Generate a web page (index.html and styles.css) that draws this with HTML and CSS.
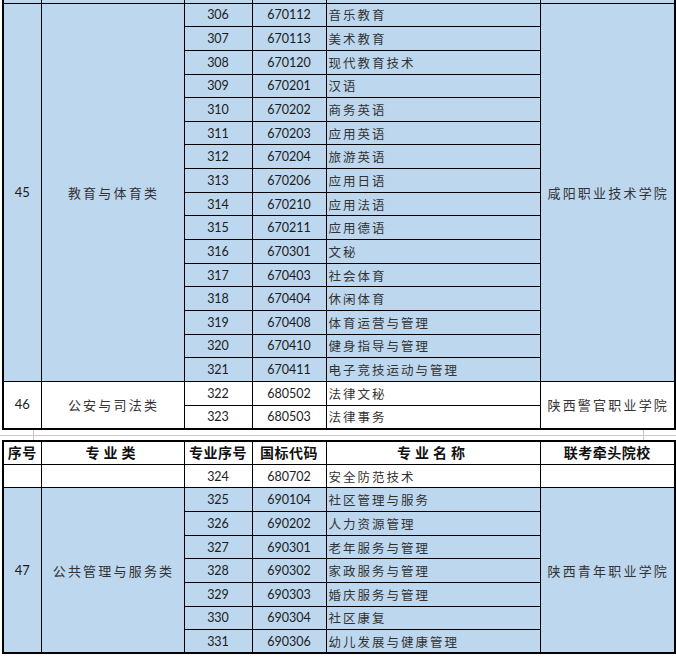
FILE: index.html
```html
<!DOCTYPE html>
<html lang="zh-CN">
<head>
<meta charset="utf-8">
<title>专业目录</title>
<link rel="stylesheet" href="styles.css">
</head>
<body>
<div class="page">
  <table class="grid first">
    <colgroup>
      <col class="c1"><col class="c2"><col class="c3"><col class="c4"><col class="c5"><col class="c6">
    </colgroup>
    <tbody>
      <tr class="blue cut"><td></td><td></td><td></td><td></td><td></td><td></td></tr>
      <tr class="blue"><td class="idx" rowspan="16">45</td><td class="cat" rowspan="16">教育与体育类</td><td class="num">306</td><td class="num">670112</td><td class="name">音乐教育</td><td class="school" rowspan="16">咸阳职业技术学院</td></tr>
      <tr class="blue"><td class="num">307</td><td class="num">670113</td><td class="name">美术教育</td></tr>
      <tr class="blue"><td class="num">308</td><td class="num">670120</td><td class="name">现代教育技术</td></tr>
      <tr class="blue"><td class="num">309</td><td class="num">670201</td><td class="name">汉语</td></tr>
      <tr class="blue"><td class="num">310</td><td class="num">670202</td><td class="name">商务英语</td></tr>
      <tr class="blue"><td class="num">311</td><td class="num">670203</td><td class="name">应用英语</td></tr>
      <tr class="blue"><td class="num">312</td><td class="num">670204</td><td class="name">旅游英语</td></tr>
      <tr class="blue"><td class="num">313</td><td class="num">670206</td><td class="name">应用日语</td></tr>
      <tr class="blue"><td class="num">314</td><td class="num">670210</td><td class="name">应用法语</td></tr>
      <tr class="blue"><td class="num">315</td><td class="num">670211</td><td class="name">应用德语</td></tr>
      <tr class="blue"><td class="num">316</td><td class="num">670301</td><td class="name">文秘</td></tr>
      <tr class="blue"><td class="num">317</td><td class="num">670403</td><td class="name">社会体育</td></tr>
      <tr class="blue"><td class="num">318</td><td class="num">670404</td><td class="name">休闲体育</td></tr>
      <tr class="blue"><td class="num">319</td><td class="num">670408</td><td class="name">体育运营与管理</td></tr>
      <tr class="blue"><td class="num">320</td><td class="num">670410</td><td class="name">健身指导与管理</td></tr>
      <tr class="blue"><td class="num">321</td><td class="num">670411</td><td class="name">电子竞技运动与管理</td></tr>
      <tr><td class="idx" rowspan="2">46</td><td class="cat" rowspan="2">公安与司法类</td><td class="num">322</td><td class="num">680502</td><td class="name">法律文秘</td><td class="school" rowspan="2">陕西警官职业学院</td></tr>
      <tr><td class="num">323</td><td class="num">680503</td><td class="name">法律事务</td></tr>
    </tbody>
  </table>

  <div class="break">
    <span class="tick left"></span>
    <span class="tick right"></span>
  </div>

  <table class="grid second">
    <colgroup>
      <col class="c1"><col class="c2"><col class="c3"><col class="c4"><col class="c5"><col class="c6">
    </colgroup>
    <thead>
      <tr class="head"><th>序号</th><th class="wide">专业类</th><th>专业序号</th><th>国标代码</th><th class="wide">专业名称</th><th>联考牵头院校</th></tr>
    </thead>
    <tbody>
      <tr><td></td><td></td><td class="num">324</td><td class="num">680702</td><td class="name">安全防范技术</td><td></td></tr>
      <tr class="blue"><td class="idx" rowspan="7">47</td><td class="cat" rowspan="7">公共管理与服务类</td><td class="num">325</td><td class="num">690104</td><td class="name">社区管理与服务</td><td class="school" rowspan="7">陕西青年职业学院</td></tr>
      <tr class="blue"><td class="num">326</td><td class="num">690202</td><td class="name">人力资源管理</td></tr>
      <tr class="blue"><td class="num">327</td><td class="num">690301</td><td class="name">老年服务与管理</td></tr>
      <tr class="blue"><td class="num">328</td><td class="num">690302</td><td class="name">家政服务与管理</td></tr>
      <tr class="blue"><td class="num">329</td><td class="num">690303</td><td class="name">婚庆服务与管理</td></tr>
      <tr class="blue"><td class="num">330</td><td class="num">690304</td><td class="name">社区康复</td></tr>
      <tr class="blue"><td class="num">331</td><td class="num">690306</td><td class="name">幼儿发展与健康管理</td></tr>
    </tbody>
  </table>
</div>
</body>
</html>
```

FILE: styles.css
```css
html, body {
  margin: 0;
  padding: 0;
  background: #ffffff;
}

body {
  width: 676px;
  height: 658px;
  overflow: hidden;
  font-family: "Noto Sans CJK SC", sans-serif;
  color: #2a2a2a;
}

.page {
  margin-top: -21px;
  padding-left: 2px;
}

.grid {
  border-collapse: collapse;
  table-layout: fixed;
  width: 672px;
  border: 2px solid #000;
}

.c1 { width: 38px; }
.c2 { width: 143px; }
.c3 { width: 68px; }
.c4 { width: 74px; }
.c5 { width: 214px; }
.c6 { width: 135px; }

.grid td,
.grid th {
  border: 1px solid #000;
  padding: 0;
  height: 23.65px;
  box-sizing: border-box;
  line-height: 15px;
  vertical-align: middle;
  white-space: nowrap;
  overflow: hidden;
}

.blue td {
  background: #bdd7ee;
}

.first {
  border-top: none;
}

.num {
  text-align: center;
  font-family: Lato, "Liberation Sans", sans-serif;
  font-size: 12.5px;
  color: #1c1c1c;
}

.name {
  text-align: left;
  padding-left: 2px !important;
  font-size: 12.5px;
  letter-spacing: 2px;
  color: #333;
}

.idx {
  text-align: center;
  font-family: Lato, "Liberation Sans", sans-serif;
  font-size: 13px;
  color: #1c1c1c;
}

.cat,
.school {
  text-align: center;
  font-size: 13px;
  letter-spacing: 2.2px;
  color: #333;
  text-indent: 2px;
}

.head th {
  background: #fff;
  font-size: 14px;
  font-weight: 700;
  letter-spacing: 0.5px;
  color: #111;
  text-align: center;
}

.head th.wide {
  letter-spacing: 4px;
}

.break {
  position: relative;
  height: 10px;
  padding-top: 5px;
  box-sizing: border-box;
}

.break::before {
  content: "";
  display: block;
  height: 1px;
  margin-left: -2px;
  background: #c8c8c8;
}

.tick {
  position: absolute;
  top: 0;
  width: 1px;
  height: 10px;
  background: #c8c8c8;
}

.tick.left { left: 31px; }
.tick.right { left: 641px; }
```
